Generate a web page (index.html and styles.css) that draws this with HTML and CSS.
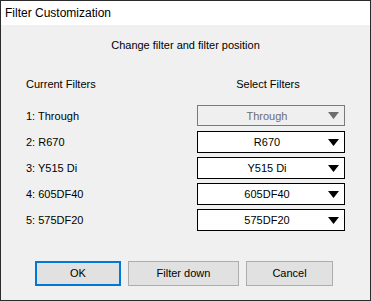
FILE: index.html
```html
<!DOCTYPE html>
<html lang="en">
<head>
  <meta charset="UTF-8">
  <title>Filter Customization</title>
  <link rel="stylesheet" href="styles.css">
</head>
<body>
  <div class="window">
    <div class="titlebar">Filter Customization</div>
    <div class="content">
      <div class="heading">Change filter and filter position</div>
      <div class="filters">
        <div class="col-head">Current Filters</div>
        <div class="col-head select-head">Select Filters</div>

        <div class="label">1: Through</div>
        <div class="combo disabled"><span>Through</span><svg width="11" height="7" viewBox="0 0 11 7"><polygon points="0,0 11,0 5.5,7"/></svg></div>

        <div class="label">2: R670</div>
        <div class="combo"><span>R670</span><svg width="11" height="7" viewBox="0 0 11 7"><polygon points="0,0 11,0 5.5,7"/></svg></div>

        <div class="label">3: Y515 Di</div>
        <div class="combo"><span>Y515 Di</span><svg width="11" height="7" viewBox="0 0 11 7"><polygon points="0,0 11,0 5.5,7"/></svg></div>

        <div class="label">4: 605DF40</div>
        <div class="combo"><span>605DF40</span><svg width="11" height="7" viewBox="0 0 11 7"><polygon points="0,0 11,0 5.5,7"/></svg></div>

        <div class="label">5: 575DF20</div>
        <div class="combo"><span>575DF20</span><svg width="11" height="7" viewBox="0 0 11 7"><polygon points="0,0 11,0 5.5,7"/></svg></div>
      </div>
      <div class="buttons">
        <div class="btn btn-ok">OK</div>
        <div class="btn btn-down">Filter down</div>
        <div class="btn btn-cancel">Cancel</div>
      </div>
    </div>
  </div>
</body>
</html>
```

FILE: styles.css
```css
body {
  margin: 0;
  font-family: "Liberation Sans", Arial, sans-serif;
  font-size: 11px;
  color: #000;
}
.window {
  width: 371px;
  height: 301px;
  box-sizing: border-box;
  border: 1px solid #2b2b2b;
  background-color: #f0f0f0;
  display: flex;
  flex-direction: column;
}
.titlebar {
  height: 24px;
  line-height: 24px;
  background-color: white;
  font-size: 12px;
  padding-left: 4px;
}
.content {
  flex: 1;
  display: flex;
  flex-direction: column;
}
.heading {
  text-align: center;
  margin-top: 13px;
  line-height: 14px;
}
.filters {
  display: grid;
  grid-template-columns: 171px 148px;
  grid-template-rows: 24px;
  grid-auto-rows: 22px;
  row-gap: 4px;
  margin-top: 25px;
  padding-left: 25px;
}
.col-head {
  line-height: 14px;
}
.select-head {
  text-align: center;
  padding-right: 6px;
}
.label {
  line-height: 22px;
}
.combo {
  box-sizing: border-box;
  border: 1px solid #000;
  background-color: white;
  display: flex;
  align-items: center;
  padding-right: 5px;
}
.combo span {
  flex: 1;
  text-align: center;
  padding-left: 8px;
}
.combo svg {
  fill: #000;
}
.combo.disabled {
  border-color: #7a7a7a;
  background-color: #efefef;
  color: #6d6d6d;
  height: 21px;
}
.combo.disabled svg {
  fill: #6d6d6d;
}
.buttons {
  display: flex;
  margin-top: 30px;
  padding-left: 34px;
}
.btn {
  box-sizing: border-box;
  height: 25px;
  line-height: 23px;
  border: 1px solid #adadad;
  background-color: #e1e1e1;
  text-align: center;
}
.btn-ok {
  width: 86px;
  border: 2px solid #0078d7;
  line-height: 21px;
}
.btn-down {
  width: 111px;
  margin-left: 7px;
}
.btn-cancel {
  width: 87px;
  margin-left: 7px;
}
```
